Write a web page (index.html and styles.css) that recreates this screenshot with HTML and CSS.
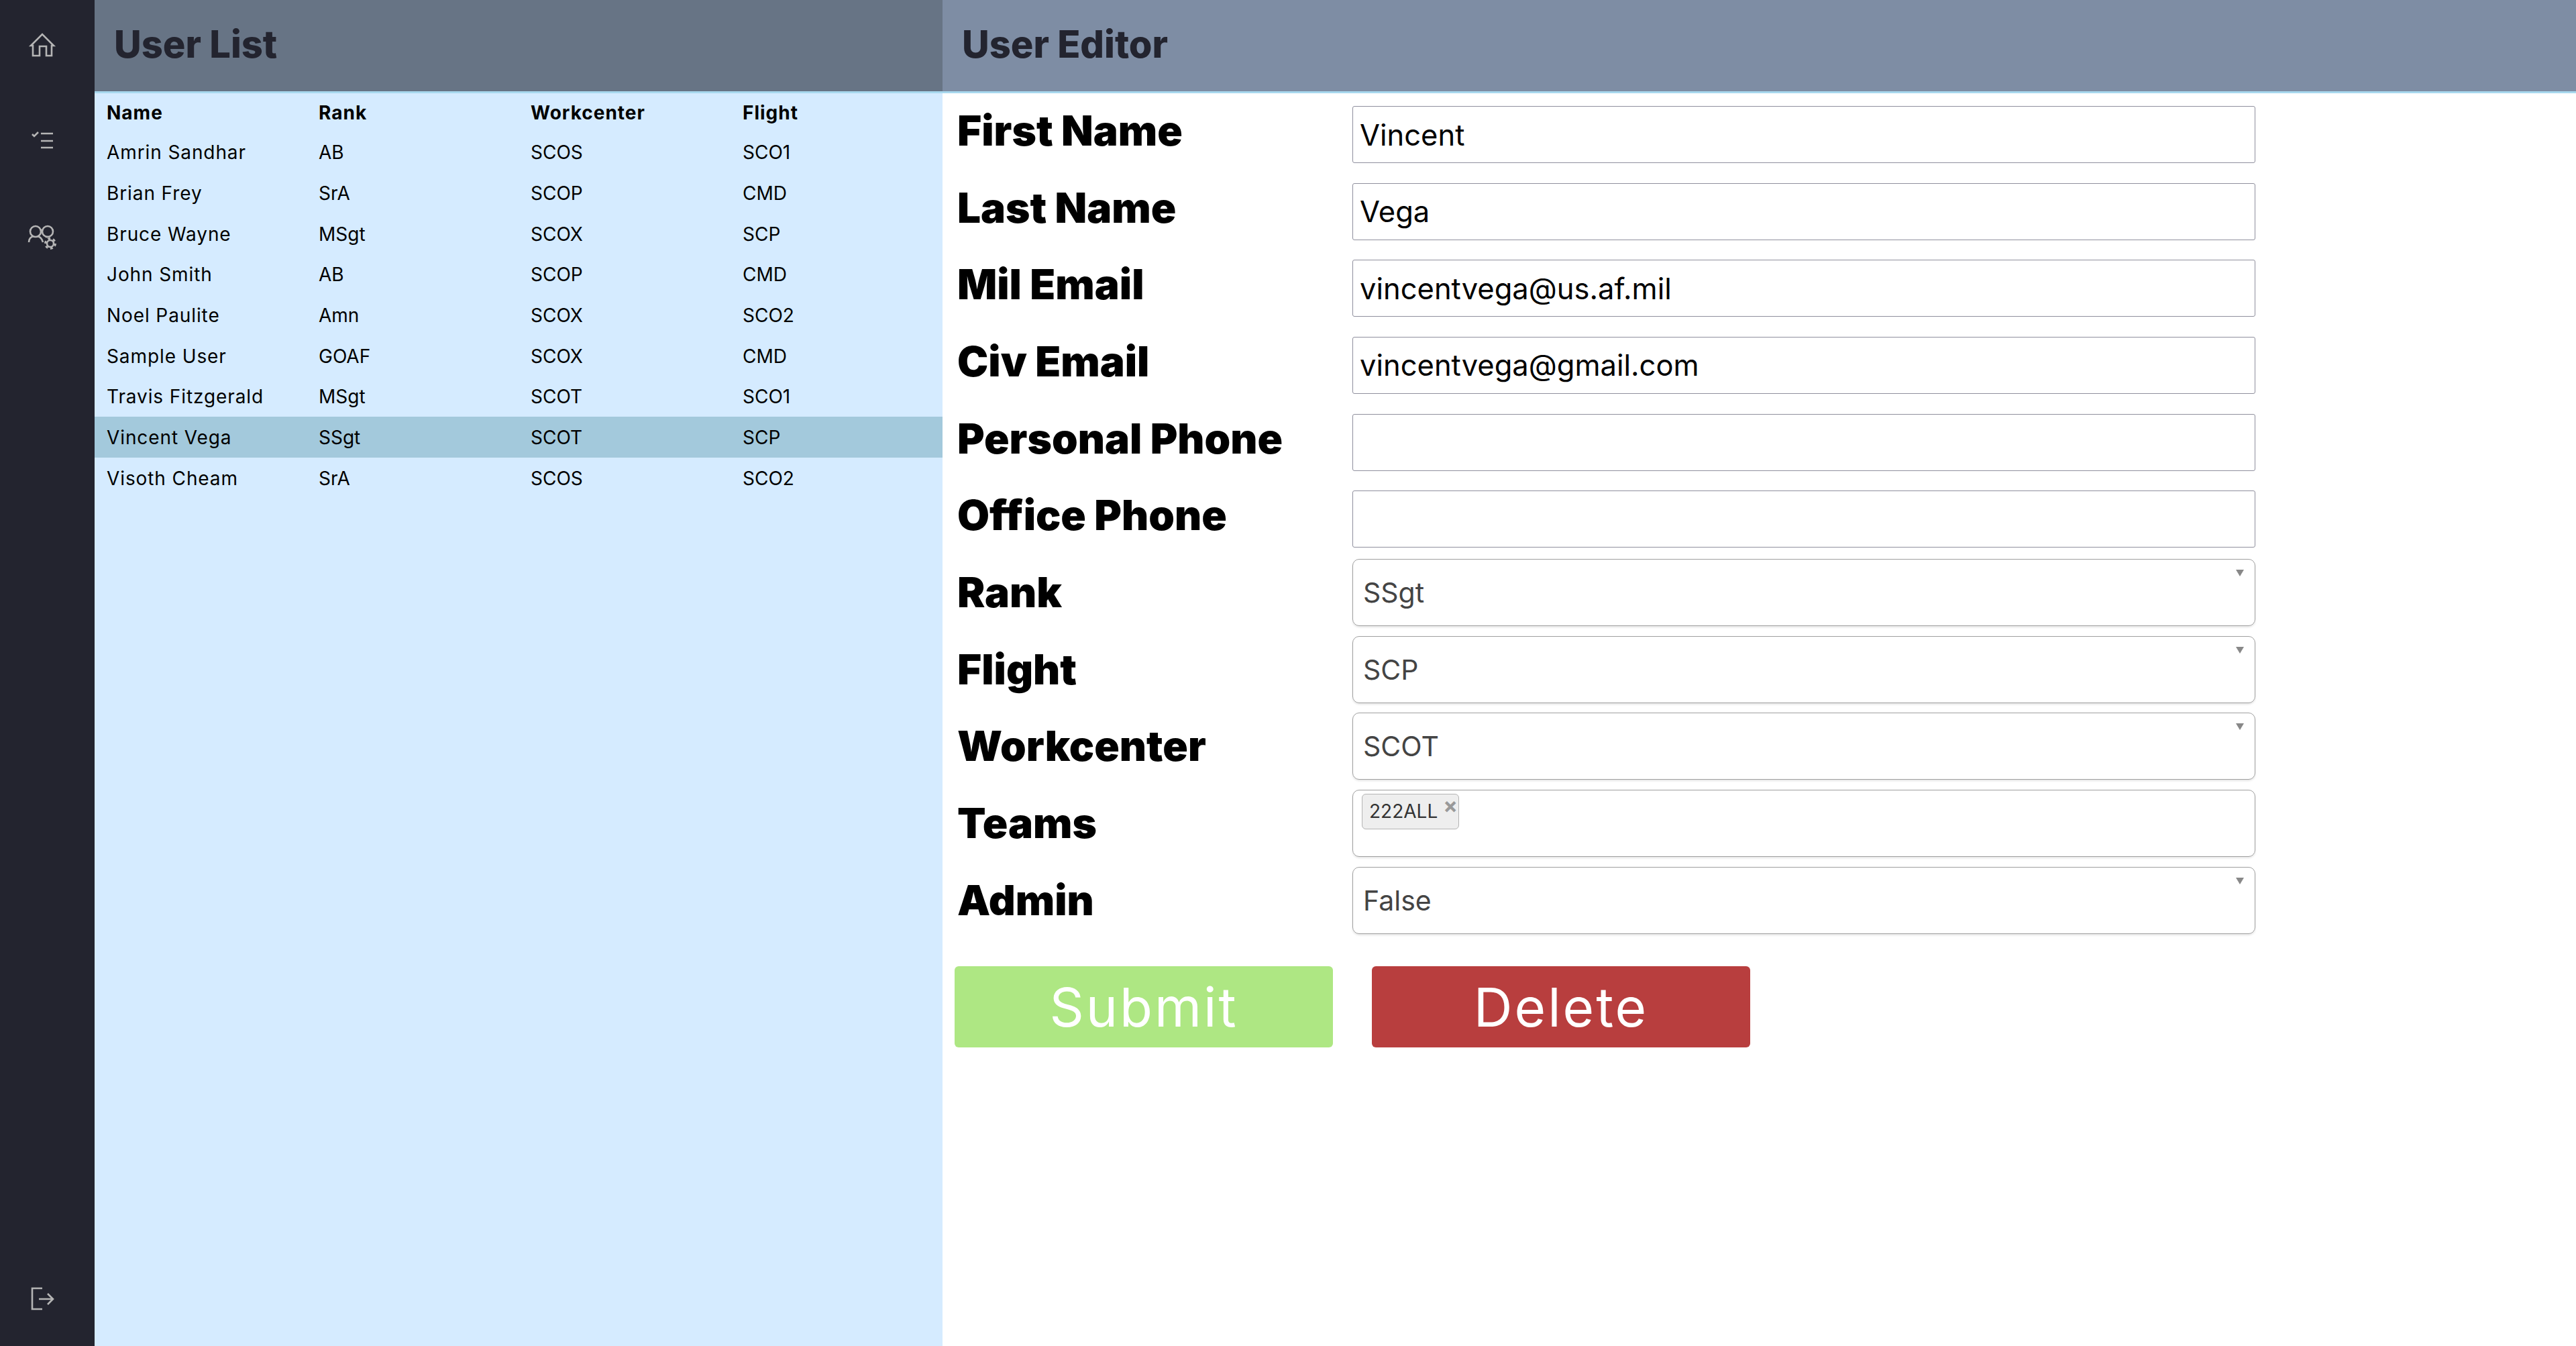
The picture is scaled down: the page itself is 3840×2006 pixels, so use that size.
FILE: index.html
```html
<!DOCTYPE html>
<html lang="en">
<head>
    <meta charset="UTF-8">
    <title>User Manager</title>
    <link rel="stylesheet" href="styles.css">
</head>
<body>
    <div class="app">
        <nav class="sidebar">
            <svg class="nav-icon" viewBox="0 0 60 60"><path d="M16 46V31H13L30 14 47 31H44V46H36V32H26V46Z"/></svg>
            <svg class="nav-icon" viewBox="0 0 60 60"><path d="M15 20l3 3 6-6M28 19H46M28 30H46M28 40H46"/></svg>
            <svg class="nav-icon" viewBox="0 0 60 60">
                <circle cx="20" cy="23" r="8"/>
                <circle cx="38" cy="23" r="8"/>
                <path d="M10 39C10 34 13 31 17 30M23 30C27 31 30 35 31 39M35 31C36 31 38 31 39 31"/>
                <circle cx="42" cy="41" r="5"/>
                <circle class="gear-teeth" cx="42" cy="41" r="7.5"/>
            </svg>
            <svg class="nav-icon logout" viewBox="0 0 60 60"><path d="M30 14H15V45H30M25 30H45M38 22L46 30 38 38"/></svg>
        </nav>

        <section class="list-panel">
            <h1 class="panel-title">User List</h1>
            <table class="user-table">
                <thead>
                    <tr><th>Name</th><th>Rank</th><th>Workcenter</th><th>Flight</th></tr>
                </thead>
                <tbody>
                    <tr><td>Amrin Sandhar</td><td>AB</td><td>SCOS</td><td>SCO1</td></tr>
                    <tr><td>Brian Frey</td><td>SrA</td><td>SCOP</td><td>CMD</td></tr>
                    <tr><td>Bruce Wayne</td><td>MSgt</td><td>SCOX</td><td>SCP</td></tr>
                    <tr><td>John Smith</td><td>AB</td><td>SCOP</td><td>CMD</td></tr>
                    <tr><td>Noel Paulite</td><td>Amn</td><td>SCOX</td><td>SCO2</td></tr>
                    <tr><td>Sample User</td><td>GOAF</td><td>SCOX</td><td>CMD</td></tr>
                    <tr><td>Travis Fitzgerald</td><td>MSgt</td><td>SCOT</td><td>SCO1</td></tr>
                    <tr class="selected"><td>Vincent Vega</td><td>SSgt</td><td>SCOT</td><td>SCP</td></tr>
                    <tr><td>Visoth Cheam</td><td>SrA</td><td>SCOS</td><td>SCO2</td></tr>
                </tbody>
            </table>
        </section>

        <section class="editor-panel">
            <h1 class="panel-title">User Editor</h1>
            <form class="editor-form">
                <div class="form-grid">
                    <label>First Name</label>
                    <input type="text" value="Vincent">
                    <label>Last Name</label>
                    <input type="text" value="Vega">
                    <label>Mil Email</label>
                    <input type="text" value="vincentvega@us.af.mil">
                    <label>Civ Email</label>
                    <input type="text" value="vincentvega@gmail.com">
                    <label>Personal Phone</label>
                    <input type="text">
                    <label>Office Phone</label>
                    <input type="text">
                    <label>Rank</label>
                    <div class="dropdown">SSgt</div>
                    <label>Flight</label>
                    <div class="dropdown">SCP</div>
                    <label>Workcenter</label>
                    <div class="dropdown">SCOT</div>
                    <label>Teams</label>
                    <div class="multi-select"><span class="chip">222ALL<span class="chip-x">×</span></span></div>
                    <label>Admin</label>
                    <div class="dropdown">False</div>
                </div>
                <div class="form-actions">
                    <button type="button" class="btn btn-submit">Submit</button>
                    <button type="button" class="btn btn-delete">Delete</button>
                </div>
            </form>
        </section>
    </div>
</body>
</html>
```

FILE: styles.css
```css
* {
    box-sizing: border-box;
}
body {
    margin: 0;
    font-family: Inter, "Noto Sans", sans-serif;
    background: white;
}
.app {
    display: flex;
    height: 100vh;
    overflow: hidden;
}

/* sidebar */
.sidebar {
    width: 141px;
    flex-shrink: 0;
    background: #23242f;
    display: flex;
    flex-direction: column;
    gap: 82.5px;
    padding: 37px 0 40px 33px;
}
.nav-icon {
    width: 60px;
    height: 60px;
    fill: none;
    stroke: #b5b5b5;
    stroke-width: 2.6;
}
.gear-teeth {
    stroke-width: 3;
    stroke-dasharray: 3.85 4;
}
.logout {
    margin-top: auto;
}

/* panels */
.list-panel {
    width: 1264px;
    flex-shrink: 0;
    background: #d5ebff;
}
.editor-panel {
    flex: 1;
}
.panel-title {
    margin: 0;
    height: 139px;
    line-height: 133px;
    padding-left: 29px;
    font-size: 56px;
    font-weight: 800;
    color: #23242f;
    background: #677485;
    border-bottom: 3px solid #a8d8ee;
}
.editor-panel .panel-title {
    background: #7e8da4;
}

/* user table */
.user-table {
    width: 100%;
    table-layout: fixed;
    border-collapse: collapse;
    font-size: 28px;
    color: black;
}
.user-table th {
    height: 57px;
    padding: 0 0 0 18px;
    text-align: left;
    font-weight: 700;
    letter-spacing: 1px;
}
.user-table td {
    height: 60.7px;
    padding: 2px 0 0 18px;
}
.user-table td:first-child {
    letter-spacing: 0.9px;
}
.selected {
    background: #a3c9dc;
}

/* editor form */
.editor-form {
    padding: 6px 0 0 18px;
}
.form-grid {
    display: grid;
    grid-template-columns: 593px 1346px;
    grid-auto-rows: 114.67px;
}
.form-grid label {
    padding-left: 4px;
    line-height: 100px;
    font-size: 62px;
    font-weight: 900;
    color: black;
}
.form-grid input {
    height: 85px;
    margin-top: 13px;
    padding: 0 10px;
    border: 1px solid #8f8f9d;
    border-radius: 3px;
    font-family: inherit;
    font-size: 43.5px;
    color: black;
}
.dropdown,
.multi-select {
    height: 100px;
    border: 1px solid #a0a0a0;
    border-radius: 10px;
    box-shadow: 0 2px 3px rgba(0, 0, 0, 0.1);
}
.dropdown {
    position: relative;
    line-height: 98px;
    padding-left: 15px;
    font-size: 41px;
    color: #444;
}
.dropdown::after {
    content: "";
    position: absolute;
    top: 15px;
    right: 16px;
    border-style: solid;
    border-width: 10px 6.5px 0;
    border-color: #888 transparent transparent;
}
.multi-select {
    padding: 5px 0 0 13px;
}
.chip {
    display: inline-flex;
    width: 145px;
    height: 53px;
    padding-left: 10px;
    line-height: 51px;
    font-size: 28px;
    color: #333;
    background: #eee;
    border: 1px solid #b4b4b4;
    border-radius: 6px;
}
.chip-x {
    margin-left: 8px;
    font-size: 32px;
    line-height: 34px;
    font-weight: 700;
    color: #999;
}
.form-actions {
    display: flex;
    gap: 58px;
    margin-top: 34px;
}
.btn {
    width: 564px;
    height: 121px;
    border: none;
    border-radius: 6px;
    font-family: inherit;
    font-size: 80px;
    letter-spacing: 3px;
    color: white;
}
.btn-submit {
    background: #aee783;
}
.btn-delete {
    background: #b83e3e;
}
```
